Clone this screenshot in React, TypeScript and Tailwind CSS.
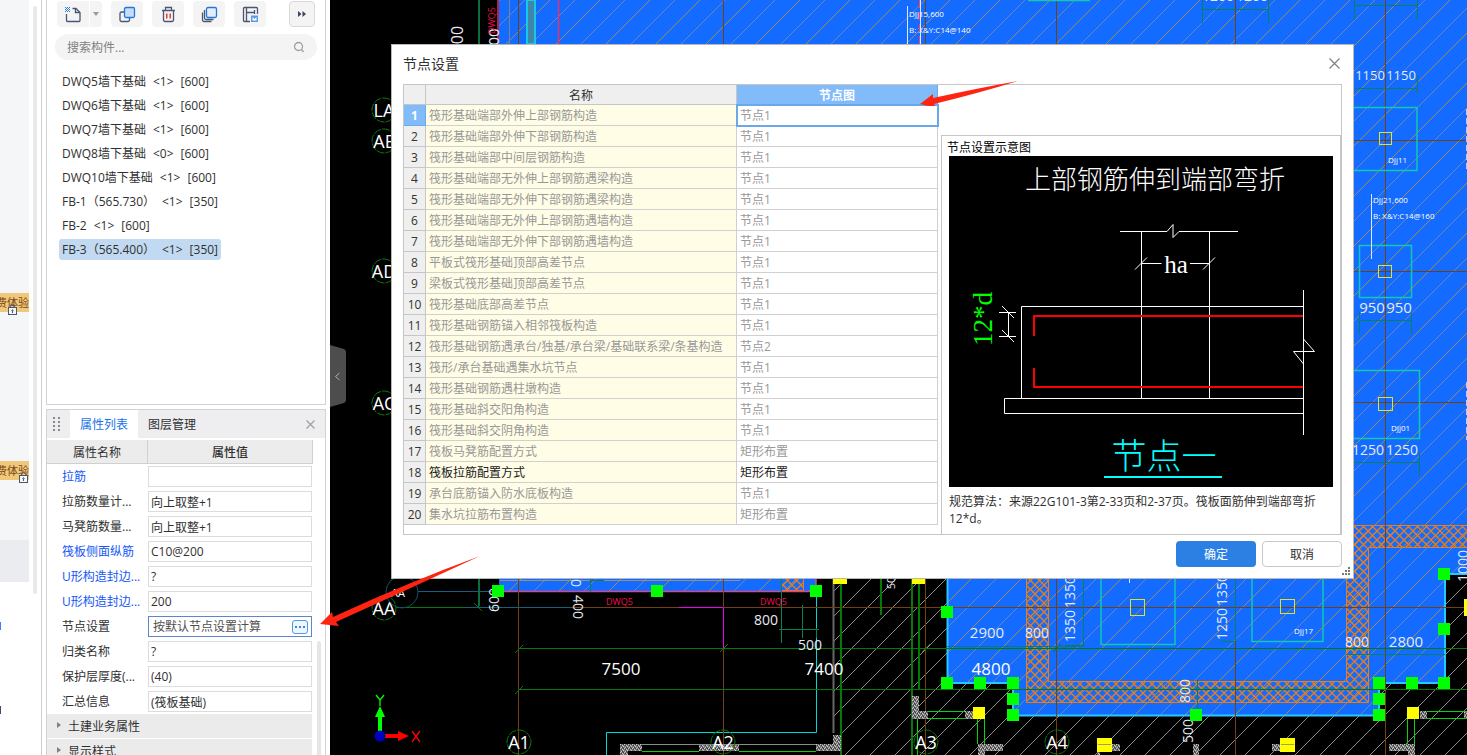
import React from "react";

const components = [
  ["DWQ5墙下基础", "<1>", "[600]"],
  ["DWQ6墙下基础", "<1>", "[600]"],
  ["DWQ7墙下基础", "<1>", "[600]"],
  ["DWQ8墙下基础", "<0>", "[600]"],
  ["DWQ10墙下基础", "<1>", "[600]"],
  ["FB-1（565.730）", "<1>", "[350]"],
  ["FB-2", "<1>", "[600]"],
  ["FB-3（565.400）", "<1>", "[350]"],
];

const properties = [
  { label: "拉筋", value: "", linked: true },
  { label: "拉筋数量计...", value: "向上取整+1" },
  { label: "马凳筋数量...", value: "向上取整+1" },
  { label: "筏板侧面纵筋", value: "C10@200", linked: true },
  { label: "U形构造封边...", value: "?", linked: true },
  { label: "U形构造封边...", value: "200", linked: true },
  { label: "节点设置", value: "按默认节点设置计算", active: true },
  { label: "归类名称", value: "?" },
  { label: "保护层厚度(...", value: "(40)" },
  { label: "汇总信息", value: "(筏板基础)" },
];

const nodes: [string, string][] = [
  ["筏形基础端部外伸上部钢筋构造", "节点1"],
  ["筏形基础端部外伸下部钢筋构造", "节点1"],
  ["筏形基础端部中间层钢筋构造", "节点1"],
  ["筏形基础端部无外伸上部钢筋遇梁构造", "节点1"],
  ["筏形基础端部无外伸下部钢筋遇梁构造", "节点1"],
  ["筏形基础端部无外伸上部钢筋遇墙构造", "节点1"],
  ["筏形基础端部无外伸下部钢筋遇墙构造", "节点1"],
  ["平板式筏形基础顶部高差节点", "节点1"],
  ["梁板式筏形基础顶部高差节点", "节点1"],
  ["筏形基础底部高差节点", "节点1"],
  ["筏形基础钢筋锚入相邻筏板构造", "节点1"],
  ["筏形基础钢筋遇承台/独基/承台梁/基础联系梁/条基构造", "节点2"],
  ["筏形/承台基础遇集水坑节点", "节点1"],
  ["筏形基础钢筋遇柱墩构造", "节点1"],
  ["筏形基础斜交阳角构造", "节点1"],
  ["筏形基础斜交阴角构造", "节点1"],
  ["筏板马凳筋配置方式", "矩形布置"],
  ["筏板拉筋配置方式", "矩形布置"],
  ["承台底筋锚入防水底板构造", "节点1"],
  ["集水坑拉筋布置构造", "矩形布置"],
];

function LockIcon() {
  return (
    <svg viewBox="0 0 9 11" className="h-[11px] w-[9px]" fill="none" stroke="#4b5670">
      <path d="M2.5 4V2.5a2 2 0 0 1 4 0V4" />
      <rect x="0.5" y="3.5" width="8" height="7" fill="#f5f6f8" />
      <circle cx="4.5" cy="6.5" r="0.7" />
      <path d="M4.5 7v2" />
    </svg>
  );
}

function TrialBadge({ lockClass }: { lockClass: string }) {
  return (
    <div className="relative flex h-[19px] w-full items-center justify-end bg-[#f0c87c] pt-0.5 text-[11px] whitespace-nowrap text-[#7a4710]">
      费体验
      <span className={`absolute ${lockClass}`}>
        <LockIcon />
      </span>
    </div>
  );
}

function NavStrip() {
  return (
    <nav className="flex h-full w-[42px] shrink-0 border-r border-[#cdcdcf] bg-white">
      <div className="flex w-[29px] flex-col overflow-hidden">
        <div className="flex h-[540px] shrink-0 flex-col bg-[#f5f6f8] pt-[293px]">
          <TrialBadge lockClass="left-2 top-[11px]" />
          <div className="h-[149px]" />
          <TrialBadge lockClass="left-[19px] top-[11px]" />
        </div>
        <div className="h-[42px] shrink-0 bg-[#ebecf0]" />
        <div className="mt-10 h-2 w-px shrink-0 bg-[#3b82f6]" />
        <div className="mt-[76px] h-2 w-px shrink-0 bg-[#5b3a7a]" />
      </div>
      <div className="mt-1.5 ml-1 h-[588px] w-1 rounded bg-[#e9e9ea]" />
    </nav>
  );
}

const toolButton = "flex h-[26px] w-8 items-center justify-center rounded bg-[#f4f4f5]";

function Toolbar() {
  return (
    <div className="flex items-center pt-px pr-[10px] pl-[10px]">
      <button aria-label="新建" className="flex h-[26px] w-8 items-center justify-center rounded-l bg-[#f4f4f5]">
        <svg viewBox="0 0 17 17" className="size-[17px]" fill="none" stroke="#4b5670" strokeWidth="1.300">
          <path d="M7.500 2.500h3.500l4 4v8a1 1 0 0 1-1 1H2.500a1 1 0 0 1-1-1V8" />
          <path d="M10.500 2.500v4H15" />
          <g fill="#2a7de1" stroke="none">
            <path d="M0 1h1v1H0zM2 1h1v1H2zM4 1h1v1H4zM1 2h1v1H1zM3 2h1v1H3zM0 3h1v1H0zM2 3h1v1H2zM4 3h1v1H4zM1 4h1v1H1zM3 4h1v1H3zM0 5h1v1H0zM2 5h1v1H2zM4 5h1v1H4z" />
          </g>
        </svg>
      </button>
      <button aria-label="新建选项" className="ml-px flex h-[26px] w-3 items-center justify-center rounded-r bg-[#f4f4f5]">
        <svg viewBox="0 0 6 4" className="h-1 w-1.5" fill="#9a9a9a">
          <path d="M0 0h6L3 4z" />
        </svg>
      </button>
      <div className="ml-[9px] flex gap-[9px]">
        <button aria-label="复制" className={toolButton}>
          <svg viewBox="0 0 17 17" className="size-[17px]" fill="none" strokeWidth="1.300">
            <path d="M5 6H2.500a1.500 1.500 0 0 0-1.500 1.500V14a1.500 1.500 0 0 0 1.500 1.500H9a1.500 1.500 0 0 0 1.500-1.500v-2" stroke="#4b5670" />
            <rect x="5.500" y="1.500" width="10" height="10" rx="1.500" fill="#c9dcf5" stroke="#1f78e0" />
          </svg>
        </button>
        <button aria-label="删除" className={toolButton}>
          <svg viewBox="0 0 17 17" className="size-[17px]" fill="none" stroke="#4b5670" strokeWidth="1.300">
            <path d="M2 4.500h13M5.500 4.500v-3h6v3M3.500 4.500v9.500a1.500 1.500 0 0 0 1.500 1.500h7a1.500 1.500 0 0 0 1.500-1.500V4.500" />
            <path d="M6.800 7.500v5M10.200 7.500v5" stroke="#e02020" />
          </svg>
        </button>
        <button aria-label="层间复制" className={toolButton}>
          <svg viewBox="0 0 17 17" className="size-[17px]" fill="none" strokeWidth="1.300">
            <rect x="5.500" y="1.500" width="10" height="10" rx="1.500" fill="#e3eefc" stroke="#1f78e0" />
            <path d="M3.500 4v8a1.500 1.500 0 0 0 1.500 1.500h7.500M1.500 6.500V14A1.500 1.500 0 0 0 3 15.500h7.500" stroke="#4b5670" />
          </svg>
        </button>
        <button aria-label="存档" className={toolButton}>
          <svg viewBox="0 0 17 17" className="size-[17px]" fill="none" stroke="#4b5670" strokeWidth="1.300">
            <path d="M8 15.500H2.500a1 1 0 0 1-1-1v-12a1 1 0 0 1 1-1h12a1 1 0 0 1 1 1V8M4.500 1.500v14M4.500 6.500h8M12.500 4v4" />
            <rect x="9" y="9.500" width="7" height="6.500" fill="#5b9be8" stroke="none" />
            <path d="M10.500 11l2 2 2-2v3.500h-4z" fill="#ffffff" stroke="none" />
          </svg>
        </button>
      </div>
      <button aria-label="更多" className="ml-auto flex size-[26px] items-center justify-center rounded border border-[#d9d9dc] bg-[#f4f4f5]">
        <svg viewBox="0 0 8 6" className="h-1.5 w-2" fill="#3b4458">
          <path d="M0 0l3.500 3L0 6zM4.500 0L8 3 4.500 6z" />
        </svg>
      </button>
    </div>
  );
}

function ComponentPanel() {
  return (
    <section className="h-[405px] shrink-0 border-x border-b border-[#d3d3d6]">
      <Toolbar />
      <label className="mx-2 mt-[7px] flex h-[26px] items-center rounded-full bg-[#f4f4f5] pr-3 pl-3">
        <input aria-label="搜索构件" placeholder="搜索构件..." className="min-w-0 flex-1 bg-transparent pt-0.5 text-xs placeholder-[#808080] outline-none" />
        <svg viewBox="0 0 12 12" className="size-3" fill="none" stroke="#a0a0a0" strokeWidth="1.300">
          <circle cx="5.500" cy="5.500" r="4" />
          <path d="M8.500 8.500l2 2.500" />
        </svg>
      </label>
      <ul className="mt-[9px] px-3">
        {components.map(([name, kind, depth], i) => (
          <li key={name} className="flex h-6 items-center">
            <button
              className={
                i === 7
                  ? "flex h-[21px] items-center gap-[7px] rounded-[3px] bg-[#c2d9f2] px-[3px] pt-0.5"
                  : "flex h-[21px] items-center gap-[7px] px-[3px] pt-0.5"
              }
            >
              <span>{name}</span>
              <span>{kind}</span>
              <span>{depth}</span>
            </button>
          </li>
        ))}
      </ul>
    </section>
  );
}

function PropertyPanel() {
  return (
    <section className="mt-1 min-h-0 flex-1 overflow-hidden border-x border-t border-[#d3d3d6]">
      <div className="flex h-7 items-stretch bg-[#eeeef0]">
        <div className="flex w-[23px] items-center pl-1.5">
          <svg viewBox="0 0 7 15" className="h-[15px] w-[7px]" fill="#8a8a8e">
            {[0, 4, 8, 12].map((y) => (
              <path key={y} d={`M0 ${y}h2v2h-2zM5 ${y}h2v2h-2z`} />
            ))}
          </svg>
        </div>
        <button className="w-[68px] bg-white pt-0.5 text-[#1a73e8]">属性列表</button>
        <button className="ml-2.5 pt-0.5">图层管理</button>
        <button aria-label="关闭" className="mr-2.5 ml-auto">
          <svg viewBox="0 0 9 9" className="size-[9px]" stroke="#a0a0a4" strokeWidth="1.200">
            <path d="M0.500 0.500l8 8M8.500 0.500l-8 8" />
          </svg>
        </button>
      </div>
      <div className="flex pt-0.5">
        <div className="w-[266px]">
          <div className="flex h-6 border-r border-b border-[#d0d0d2] bg-[#ececec] leading-[25px]">
            <div className="w-[101px] border-r border-[#d0d0d2] text-center">属性名称</div>
            <div className="flex-1 text-center font-medium">属性值</div>
          </div>
          {properties.map((p, i) => (
            <div key={i} className="flex h-[25px] items-center">
              <label htmlFor={`prop-${i}`} className={p.linked ? "w-[101px] pl-[15px] text-[#1557f5]" : "w-[101px] pl-[15px]"}>
                {p.label}
              </label>
              {p.active ? (
                <div className="flex h-[21px] w-[164px] items-center border border-[#5b85d0] pr-[3px] pl-1">
                  <input id={`prop-${i}`} defaultValue={p.value} className="min-w-0 flex-1 text-[#505050] outline-none" />
                  <button aria-label="编辑" className="flex h-[14px] w-4 items-center justify-center gap-0.5 rounded-[3px] border border-[#4a9be8] bg-[#eef5fd]">
                    <i className="size-0.5 bg-[#3b86dc]" />
                    <i className="size-0.5 bg-[#3b86dc]" />
                    <i className="size-0.5 bg-[#3b86dc]" />
                  </button>
                </div>
              ) : (
                <input id={`prop-${i}`} defaultValue={p.value} className="h-[21px] w-[164px] border border-[#dcdcde] pl-0.5 outline-none" />
              )}
            </div>
          ))}
          {["土建业务属性", "显示样式"].map((g) => (
            <button key={g} className="mb-px flex h-6 w-[265px] items-center bg-[#ebebeb] pt-0.5 pl-2.5">
              <svg viewBox="0 0 4 6" className="mr-[7px] mb-1 h-1.5 w-1" fill="#808080">
                <path d="M0 0l4 3-4 3z" />
              </svg>
              {g}
            </button>
          ))}
        </div>
        <div className="mt-[201px] ml-1 w-1 rounded bg-[#e6e6e8]" />
      </div>
    </section>
  );
}

function Grip({ x, y }: { x: number; y: number }) {
  return <rect x={x - 6} y={y - 6} width="12" height="12" fill="#00ff00" />;
}

function Axis({ x, y, name, size = 18 }: { x: number; y: number; name: string; size?: number }) {
  return (
    <g>
      <circle cx={x} cy={y} r="12" fill="none" stroke="#0a7a0a" strokeDasharray="8 1" />
      <text x={x} y={y + 7} textAnchor="middle" fill="#fff" fontSize={size}>
        {name}
      </text>
    </g>
  );
}

const cad = "'Open Sans',sans-serif";

function Dim({ x, y, t, up = false, size = 15 }: { x: number; y: number; t: string; up?: boolean; size?: number }) {
  return (
    <text
      x={x}
      y={y}
      fill="#e6eaf2"
      fontSize={size}
      fontFamily={cad}
      textAnchor="middle"
      dominantBaseline="central"
      transform={up ? `rotate(-90 ${x} ${y})` : undefined}
    >
      {t}
    </text>
  );
}

const slab =
  "M499 0H1467V574H1445V683H1379V715H1013V683H947V578H816V591H499z";

function Drawing() {
  return (
    <svg viewBox="330 0 1137 755" preserveAspectRatio="xMinYMin slice" className="h-full w-full bg-black">
      <defs>
        <pattern id="hatch" width="50" height="50" patternUnits="userSpaceOnUse">
          <path d="M-1 51L51 -1" stroke="#a0875f" />
          <path d="M-1 26L26 -1M24 51L51 24" stroke="#7384a6" />
        </pattern>
        <pattern id="hatchDark" width="25" height="25" patternUnits="userSpaceOnUse">
          <path d="M-1 26L26 -1" stroke="#8a8a8a" />
        </pattern>
        <pattern id="mesh" width="9" height="9" patternUnits="userSpaceOnUse">
          <path d="M-1 -1L10 10M-1 10L10 -1" stroke="#ee7d11" strokeWidth="1.300" />
        </pattern>
        <pattern id="concrete" width="4" height="4" patternUnits="userSpaceOnUse">
          <rect width="4" height="4" fill="#777" />
          <path d="M0 0h1v1H0zM2 1h1v1H2zM1 3h1v1H1zM3 2h1v1H3z" fill="#c8c8c8" />
          <path d="M1 1h1v1H1zM3 0h1v1H3zM2 3h1v1H2z" fill="#3a3a3a" />
        </pattern>
      </defs>

      <path d="M833 578H1467V755H833z" fill="url(#hatchDark)" />
      <path d={slab} fill="#136cff" />
      <path d={slab} fill="url(#hatch)" />

      {/* strip footing band */}
      <path d="M1354 525H1467V547H1368V702H1026V578H1048V681H1346V547H1354z" fill="url(#mesh)" />
      <path d="M1354 525.500H1467M1467 547.500H1368.500V702.500H1026.500V578M1048.500 578V681.500H1346.500V578" fill="none" stroke="#ee7d11" />
      <rect x="781.500" y="578.500" width="22" height="12" fill="url(#mesh)" stroke="#ee7d11" />

      {/* slab outlines */}
      <g fill="none" strokeWidth="1.500">
        <path d="M947.500 578V683H1013V715.500H1379V683H1445V574H1467" stroke="#25c8ff" strokeWidth="2" />
        <path d="M498 0V44M558.500 0V44" stroke="#e8306a" />
        <path d="M498 591.500H816V578" stroke="#d04a90" />
        <path d="M816.500 591V732.500H606.500V755" stroke="#00d8d8" strokeWidth="1" />
        <path d="M679 607.500H723" stroke="#f000f0" strokeWidth="1" />
        <path d="M833.500 578V733" stroke="#666" strokeWidth="2" />
      </g>
      <path d="M527 0h8v44h-8z" fill="#3f86a8" stroke="#18c8e8" strokeWidth="2" />
      <path d="M509.500 0V44" stroke="#7f7f90" />
      <path d="M500 580.500H740" stroke="#8f8f9a" />

      {/* building axes */}
      <g stroke="#74400f">
        <path d="M518.500 0V755M723.500 0V755M925.500 0V755M1056.500 0V755M1235.500 0V755M1385.500 0V755" />
        <path d="M570 607.500H679M723 607.500H1467M1354 140.500H1467M1354 271.500H1467M1354 402.500H1467" />
      </g>
      <path d="M723.500 608V648" stroke="#f000f0" />
      <g stroke="#067a06">
        <path d="M519 648.500H1467M519 689.500H1467M478.500 0V44M478.500 578V608M396 607.500H478" />
        <path d="M515 653l8-8M515 694l8-8M720 652l8-8M922 652l8-8M1053 652l8-8M474 603l8 8" />
        <path d="M841 578V755M912 578V755M919 578V690M881 578V615" strokeWidth="2" />
      </g>
      <path d="M479.500 0V44M479.500 578V606M418 591.500H498M465 607.500H570" stroke="#14607a" />

      {/* isolated footings */}
      <g fill="none" stroke="#12c8b0" strokeWidth="1.500">
        <path d="M1354 107.500h63v63h-63M1354 370.500h65.500v68h-65.500M1101 578v66.500h74V578M1252 578v63.500h71V578" />
        <rect x="1359.500" y="245.500" width="52" height="52" />
        <path d="M1028 0.500h62" />
      </g>
      <g fill="none" stroke="#e3e02a">
        <rect x="1379.500" y="132.500" width="12" height="12" />
        <rect x="1378.500" y="265.500" width="13" height="12" />
        <rect x="1378.500" y="397.500" width="14" height="13" />
        <rect x="1130.500" y="599.500" width="14" height="16" />
        <rect x="1280.500" y="599.500" width="14" height="14" />
      </g>

      {/* dimension chains */}
      <g fill="none" stroke="#08805c">
        <path d="M1354 88.500h63M1417.500 75v18M1354 5.500h63M1354.500 0v20M1417.500 0v20M1202 9.500h66M1202.500 0v23M1268.500 0v23" />
        <path d="M1359 320.500h53M1359.500 312v22M1411.500 312v22M1354 462.500h65.500M1419.500 452v24" />
        <path d="M781.500 578v65M802.500 605v33M816.500 628v10M779 629.500h40M590 580.500h14M590.500 578v14" />
        <path d="M1083.500 578v67M1065 645.500h20M1235.500 578v64M1221 641.500h16M1346 654.500h99M947 646.500h136M1197.500 680v34" />
      </g>

      {/* walls and columns below the slab */}
      <g fill="url(#concrete)">
        <path d="M620 744h22v7h-14v4h-8zM699 744h40v7h-40zM816 744h17v-9h8v16h-25z" />
        <path d="M912 696h7v15h9v8h-16zM965 711h9v8h-9zM978 744h25v7h-18v4h-7z" />
        <path d="M1111 744h9v7h-20v4h-3v-11zM1193 744h6v11h-6zM1272 744h9v7h-9zM1420 711h7v8h-7zM1389 744h26v11h-7v-4h-19zM1464 711h3v8h-3z" />
      </g>
      <g fill="none" stroke="#0ad20a">
        <path d="M928 711.500h37M928 718.500h37M917.500 719v36M977.500 719v25M984.500 719v25M642 751.500h57M739 751.500h77" />
        <path d="M1427 711.500h40M1427 718.500h40M1407.500 719v25M1414.500 719v25" />
      </g>
      <path d="M642 744.500h174" stroke="#8a8a8a" />
      <g fill="#ffff00">
        <path d="M833 578h14v6h-14zM912 578h13v6h-13zM973 707h12v12h-12zM1097 738h15v14h-15zM1280 738h15v14h-15zM1407 707h12v12h-12zM1464 599h3v17h-3z" />
      </g>
      <path d="M1098 744.500h13M1281 744.500h13" stroke="#a0a060" />

      {/* axis bubbles */}
      <g className="font-['Open_Sans',sans-serif]">
        <Axis x={384} y={110} name="LA" />
        <Axis x={384} y={141} name="AE" />
        <Axis x={384} y={271} name="AD" />
        <Axis x={384} y={403} name="AC" />
        <Axis x={384} y={608} name="AA" />
        <Axis x={519} y={742} name="A1" />
        <Axis x={723} y={742} name="A2" />
        <Axis x={926} y={742} name="A3" />
        <Axis x={1057} y={742} name="A4" />
        <circle cx="402" cy="592" r="16" fill="none" stroke="#14506a" />
        <text x="398" y="597" textAnchor="middle" fill="#fff" fontSize="11">AA</text>
        <text x="621" y="675" textAnchor="middle" fill="#fff" fontSize="17">7500</text>
        <text x="824" y="675" textAnchor="middle" fill="#fff" fontSize="17">7400</text>
        <text x="991" y="675" textAnchor="middle" fill="#fff" fontSize="17">4800</text>
      </g>

      <Dim x={457} y={35} t="00" up size={16} />
      <Dim x={493} y={37} t="00" up />
      <Dim x={493} y={600} t="600" up size={14} />
      <g fill="#e6eaf2" fontSize="14" fontFamily={cad}>
        <text x="573" y="595" transform="rotate(90 573 595)">400</text>
        <text x="571" y="579" transform="rotate(90 571 579)">0</text>
      </g>
      <Dim x={766} y={619} t="800" size={14} />
      <Dim x={810} y={644} t="500" size={14} />
      <Dim x={890} y={583} t="50" up size={11} />
      <Dim x={987} y={632} t="2900" />
      <Dim x={1037} y={632} t="800" size={14} />
      <Dim x={1069} y={626} t="1350" up size={14} />
      <Dim x={1069} y={592} t="1350" up size={14} />
      <Dim x={1221} y={624} t="1250" up size={14} />
      <Dim x={1221} y={590} t="1350" up size={14} />
      <Dim x={1357} y={641} t="800" size={14} />
      <Dim x={1406} y={641} t="2800" />
      <Dim x={1184} y={691} t="800" up size={14} />
      <Dim x={1187} y={731} t="500" up size={14} />
      <Dim x={1462} y={566} t="1000" up size={14} />
      <Dim x={1370} y={75} t="1150" size={13} />
      <Dim x={1401} y={75} t="1150" size={13} />
      <Dim x={1372} y={307} t="950" />
      <Dim x={1399} y={307} t="950" />
      <Dim x={1368} y={449} t="1250" size={14} />
      <Dim x={1402} y={449} t="1250" size={14} />
      <Dim x={1218} y={-5} t="1200" size={14} />
      <Dim x={1252} y={-5} t="1200" size={14} />
      <g fill="#fff" fontSize="8" fontFamily={cad}>
        <text x="909" y="17">DJj15,600</text>
        <text x="909" y="33">B: X&amp;Y:C14@140</text>
        <text x="1388" y="163">DJj11</text>
        <text x="1373" y="203">DJj21,600</text>
        <text x="1373" y="219">B: X&amp;Y:C14@160</text>
        <text x="1391" y="431">DJj01</text>
        <text x="1294" y="634">DJj17</text>
      </g>
      <path d="M907.500 6V44M1371.500 194V259M1129.500 578v5M920.500 0V44" stroke="#dfe8ff" />
      <path d="M919.500 0V44" stroke="#ff4060" strokeDasharray="8 4" />
      <path d="M1466.500 109V170M1466.500 382V440" stroke="#b9cbf5" strokeDasharray="6 3" />
      <g fill="#f0104a" fontSize="9" fontFamily={cad}>
        <text x="606" y="605">DWQ5</text>
        <text x="760" y="605">DWQ5</text>
        <text x="495" y="34" transform="rotate(-90 495 34)">DWQ5</text>
      </g>

      {/* selection grips */}
      {[
        [498, 591], [657, 591], [816, 591], [947, 612], [947, 683], [980, 683],
        [1013, 683], [1013, 699], [1013, 715], [1196, 715], [1379, 683], [1379, 699],
        [1379, 715], [1412, 683], [1444, 683], [1444, 629], [1444, 574],
      ].map(([x, y]) => (
        <Grip key={`${x}-${y}`} x={x} y={y} />
      ))}

      {/* coordinate gizmo */}
      <path d="M378 733V717h-3l5-11 5 11h-3v16z" fill="#00ff00" />
      <path d="M384 734h14v-3l11 5-11 5v-3h-14z" fill="#ff0000" />
      <circle cx="380" cy="736" r="5.500" fill="#0000c0" />
      <path d="M376 695l4 5 4-5M380 700v6" fill="none" stroke="#00ff00" strokeWidth="1.300" />
      <path d="M412 731l8 11M420 731l-8 11" fill="none" stroke="#ff0000" strokeWidth="1.300" />
    </svg>
  );
}

function NodeDiagram() {
  return (
    <svg viewBox="949 156 384 331" className="w-full bg-black" fill="none" stroke="#fff">
      <g stroke="none" className="font-['Liberation_Serif','Noto_Sans_CJK_SC',serif] font-light">
        <text x="1155" y="189" textAnchor="middle" fontSize="26" fill="#fff">上部钢筋伸到端部弯折</text>
        <text x="1176" y="273" textAnchor="middle" fontSize="25" fill="#fff">ha</text>
        <text x="1164" y="469" textAnchor="middle" fontSize="35" fill="#00ffff">节点一</text>
        <text x="992" y="319" textAnchor="middle" fontSize="27" fill="#00ff00" transform="rotate(-90 992 319)">12*d</text>
      </g>
      <path d="M1120 231.500h47l6-7v13l6-6h59" />
      <path d="M1141.500 231.500V398.500M1209.500 231.500V398.500" />
      <path d="M1141.500 263.500h20M1190 263.500h19.500M1135 269.500l12-12M1203 269.500l12-12" />
      <path d="M1303.500 306.500H1021.500V398.500" />
      <path d="M1303.500 398.500H1004.500v15h299" />
      <path d="M1303.500 290V339l11 12.500h-21l10 12.500V435" />
      <path d="M1303.500 339v25" />
      <path d="M999 312.500h17M999 336.500h17M1008.500 312.500v24M1002 306l12 12M1002 330l12 12" />
      <path d="M1303 316H1034v20M1034 368v19h269" stroke="#ff0000" strokeWidth="2" />
      <path d="M1104 477h118" stroke="#00ffff" strokeWidth="2" />
    </svg>
  );
}

function NodeDialog() {
  return (
    <div
      role="dialog"
      aria-labelledby="dialog-title"
      className="absolute top-11 left-[391px] w-[963px] border border-[#b8b8b8] bg-white px-[11px] pb-[11px]"
    >
      <header className="flex h-[39px] items-center justify-between pb-0.5">
        <h1 id="dialog-title" className="text-sm">节点设置</h1>
        <button aria-label="关闭" className="mr-0.5">
          <svg viewBox="0 0 11 11" className="size-[11px]" stroke="#808080" strokeWidth="1.200">
            <path d="M0.500 0.500l10 10M10.500 0.500l-10 10" />
          </svg>
        </button>
      </header>
      <div className="flex h-[451px] border border-[#c6c6c6]">
        <table className="h-fit w-[534px] shrink-0 table-fixed border-separate border-spacing-0">
          <colgroup>
            <col className="w-[22px]" />
            <col className="w-[311px]" />
            <col className="w-[201px]" />
          </colgroup>
          <thead>
            <tr className="h-5">
              <th className="border-r border-b border-[#c6c6c6] bg-[#efefef] p-0" />
              <th className="border-r border-b border-[#c6c6c6] bg-[#efefef] p-0 pt-0.5 leading-[17px] font-normal">名称</th>
              <th className="border-r border-b border-[#6aaaf0] bg-[#82bbfa] p-0 pt-0.5 leading-[17px] font-bold text-white">节点图</th>
            </tr>
          </thead>
          <tbody>
            {nodes.map(([name, value], i) => (
              <tr key={name} className={i === 17 ? "h-[21px] text-[#202020]" : "h-[21px] text-[#989898]"}>
                <th
                  scope="row"
                  className={
                    i === 0
                      ? "border-r border-b border-[#6aaaf0] bg-[#82bbfa] p-0 pt-0.5 leading-[18px] font-bold text-white"
                      : "border-r border-b border-[#c6c6c6] bg-[#efefef] p-0 pt-0.5 leading-[18px] font-normal text-[#333]"
                  }
                >
                  {i + 1}
                </th>
                <td className="overflow-hidden border-r border-b border-[#d0d0d0] bg-[#fffde6] p-0 pt-0.5 pl-[3px] leading-[18px] whitespace-nowrap">{name}</td>
                <td
                  className={
                    i === 0
                      ? "border-r border-b border-transparent bg-white p-0 pt-0.5 pl-[3px] leading-[18px] outline-2 -outline-offset-1 outline-[#6aa8ea]"
                      : "border-r border-b border-[#d0d0d0] p-0 pt-0.5 pl-[3px] leading-[18px]"
                  }
                >
                  {value}
                </td>
              </tr>
            ))}
          </tbody>
        </table>
        <aside className="mt-[50px] ml-[3px] min-w-0 flex-1 border-t border-l border-[#c6c6c6] pr-2 pl-[7px] shadow-[inset_-1px_0_0_#c6c6c6]">
          <h2 className="-ml-0.5 pt-1 leading-4 text-black">节点设置示意图</h2>
          <NodeDiagram />
          <p className="pt-1.5 leading-[17px]">规范算法：来源22G101-3第2-33页和2-37页。筏板面筋伸到端部弯折12*d。</p>
        </aside>
      </div>
      <footer className="mt-1.5 flex justify-end gap-1.5">
        <button className="h-[26px] w-20 rounded bg-[#2c80e4] pt-0.5 text-white">确定</button>
        <button className="h-[26px] w-20 rounded border border-[#c9c9c9] bg-white pt-0.5">取消</button>
      </footer>
      <svg viewBox="0 0 8 8" className="absolute right-[3px] bottom-[3px] size-2" fill="#77777c">
        <path d="M6 0h2v2H6zM3 3h2v2H3zM6 3h2v2H6zM0 6h2v2H0zM3 6h2v2H3zM6 6h2v2H6z" />
      </svg>
    </div>
  );
}

export default function App() {
  return (
    <div className="relative flex h-screen overflow-hidden bg-white font-['Open_Sans','Noto_Sans_CJK_SC',sans-serif] text-xs text-[#303030]">
      <NavStrip />
      <div className="flex w-[288px] shrink-0 flex-col pr-1 pl-1">
        <ComponentPanel />
        <PropertyPanel />
      </div>
      <main className="relative min-w-0 flex-1 bg-black">
        <Drawing />
        <button aria-label="收起面板" className="absolute top-[345px] left-0 h-[62px] w-4">
          <svg viewBox="0 0 16 62" className="h-full w-full">
            <path d="M0 0L14 4Q16 5 16 7V55Q16 57 14 58L0 62z" fill="#4d4d4d" />
            <path d="M9.500 28L5.500 31.500L9.500 35" fill="none" stroke="#b0b0b0" />
          </svg>
        </button>
      </main>
      <NodeDialog />
      <svg viewBox="0 0 100 26" className="pointer-events-none absolute top-[80px] left-[919px] h-[26px] w-[100px]" fill="#ff2312">
        <path d="M1 24L14 14L14 18Q60 8 99 1Q60 13 15 24L17 28z" />
      </svg>
      <svg viewBox="0 0 162 70" className="pointer-events-none absolute top-[556px] left-[319px] h-[70px] w-[162px]" fill="#ff2312">
        <path d="M1 68L13 56L14 61Q90 26 161 0Q90 33 17 66L20 70z" />
      </svg>
    </div>
  );
}
